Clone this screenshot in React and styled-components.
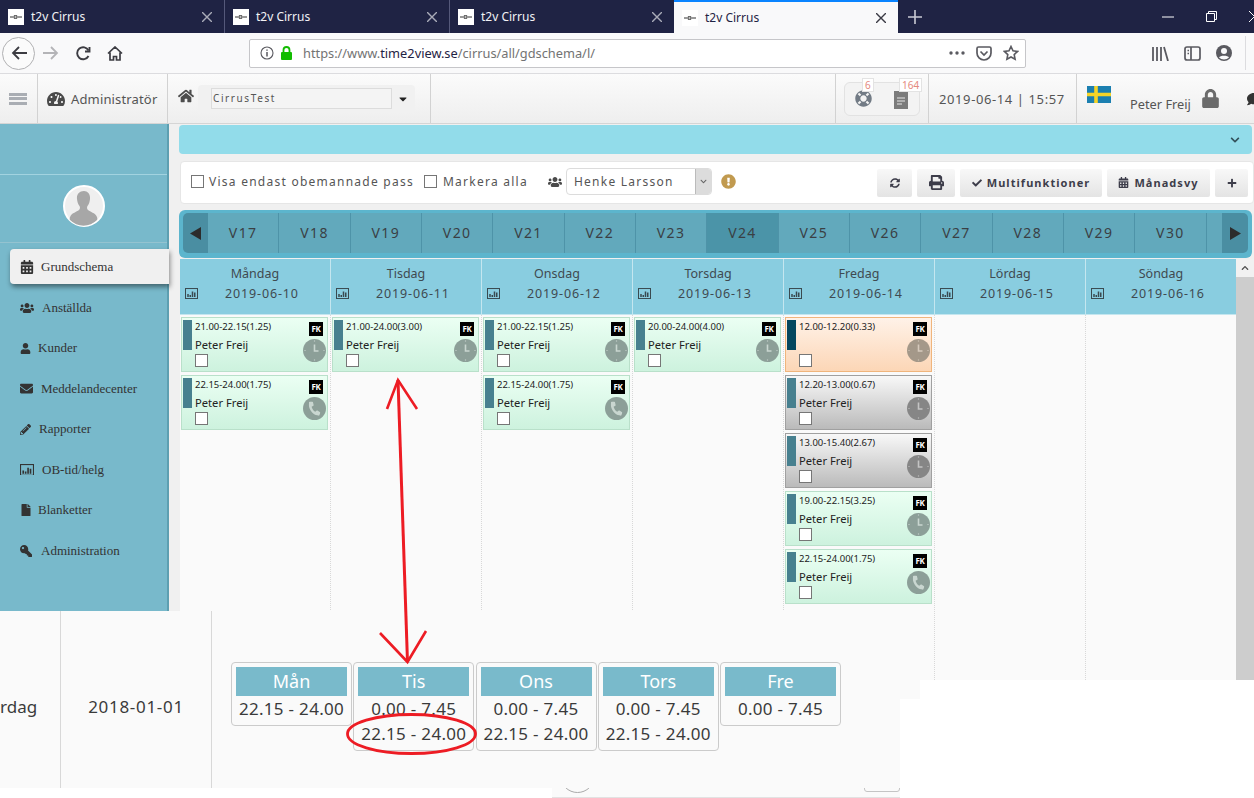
import styled, { createGlobalStyle } from "styled-components";
import {
  FaCalendarAlt, FaUsers, FaUser, FaEnvelope, FaPencilAlt, FaFile, FaKey, FaTachometerAlt,
  FaHome, FaLifeRing, FaLock, FaSyncAlt, FaPrint, FaCheck, FaPlus, FaExclamationCircle,
  FaComment, FaCaretDown, FaChevronDown, FaChevronUp, FaPhone,
} from "react-icons/fa";

const UI = `"Noto Sans", "Open Sans", sans-serif`;

const Global = createGlobalStyle`
  html, body { margin: 0; padding: 0; height: 798px; overflow: hidden; background: #fff; }
  body { font-family: ${UI}; color: #333; }
  * { box-sizing: border-box; }
`;

const Page = styled.div`
  position: relative;
  width: 1254px;
  height: 798px;
  overflow: hidden;
  display: flex;
  flex-direction: column;
`;

/* browser chrome */
const TabStrip = styled.div`
  height: 33px;
  background: #1f2344;
  display: flex;
  flex: none;
`;
const Tab = styled.div`
  width: ${(p) => (p.$active ? "224px" : "225px")};
  margin-left: ${(p) => (p.$active ? "-1px" : "0")};
  display: flex;
  align-items: center;
  padding: 0 12px 0 8px;
  font-size: 12px;
  color: ${(p) => (p.$active ? "#1f2344" : "#f2f2f5")};
  background: ${(p) => (p.$active ? "#f9f9fa" : "transparent")};
  border-top: ${(p) => (p.$active ? "2px solid #0a84ff" : "0")};
  border-right: ${(p) => (p.$active ? "0" : "1px solid #55597a")};
`;
const Favicon = styled.span`
  width: 16px;
  height: 16px;
  background: #fff;
  margin-right: 7px;
  display: flex;
  align-items: center;
  justify-content: center;
  flex: none;
`;
const TabTitle = styled.span`
  flex: 1;
`;
const WindowArea = styled.div`
  flex: 1;
  display: flex;
  align-items: center;
  color: #e6e6ea;
  padding-left: 9px;
`;
const WindowSpacer = styled.div`
  flex: 1;
`;
const WindowIcons = styled.div`
  display: flex;
  align-items: center;
  gap: 32px;
  margin-right: -6px;
`;

const Toolbar = styled.div`
  height: 41px;
  background: #f9f9fa;
  border-bottom: 1px solid #dcdcdf;
  display: flex;
  align-items: center;
  flex: none;
  padding-left: 2px;
`;
const BackCircle = styled.span`
  width: 33px;
  height: 33px;
  border: 1px solid #b1b1b3;
  border-radius: 50%;
  display: flex;
  align-items: center;
  justify-content: center;
  background: #fbfbfb;
`;
const NavIcon = styled.span`
  width: 32px;
  display: flex;
  justify-content: center;
`;
const UrlBox = styled.div`
  margin-left: 118px;
  width: 777px;
  height: 29px;
  background: #fff;
  border: 1px solid #c6c6c9;
  border-radius: 2px;
  display: flex;
  align-items: center;
  padding: 0 6px 0 10px;
  font-size: 12.8px;
  color: #737373;
`;
const UrlText = styled.span`
  flex: 1;
  margin-left: 10px;
  b { font-weight: 400; color: #1f2344; }
`;
const UrlActions = styled.div`
  display: flex;
  align-items: center;
  gap: 11px;
`;
const BrowserTools = styled.div`
  display: flex;
  align-items: center;
  gap: 15px;
  margin-left: 125px;
  height: 34px;
  padding-right: 13px;
  border-right: 1px solid #dcdcdf;
`;

/* app header */
const AppHeader = styled.header`
  height: 50px;
  flex: none;
  display: flex;
  overflow: hidden;
  background: linear-gradient(#fbfbfb, #eeeeee);
  border-bottom: 1px solid #d5d5d5;
`;
const HeadCell = styled.div`
  width: ${(p) => p.$w}px;
  flex: none;
  display: flex;
  align-items: center;
  border-right: ${(p) => (p.$plain ? "0" : "1px solid #d2d2d2")};
  padding-left: ${(p) => p.$pad || 0}px;
  font-size: 13px;
  color: #555;
`;
const Burger = styled.span`
  width: 18px;
  height: 12px;
  border-top: 3px solid #a9adb3;
  border-bottom: 3px solid #a9adb3;
  position: relative;
  &::after {
    content: "";
    position: absolute;
    left: 0;
    right: 0;
    top: 1.5px;
    height: 3px;
    background: #a9adb3;
  }
`;
const RoleLabel = styled.span`
  margin-left: 6px;
  letter-spacing: 0.15px;
`;
const TenantGroup = styled.div`
  width: 217px;
  height: 28px;
  margin-left: 4px;
  background: #f1f1f1;
  border-radius: 4px;
  display: flex;
  align-items: center;
  padding-left: 13px;
`;
const TenantInput = styled.div`
  width: 181px;
  height: 21px;
  border: 1px solid #dcdcdc;
  background: #f4f4f4;
  font-size: 10px;
  line-height: 18px;
  padding-left: 1px;
  letter-spacing: 1.6px;
  color: #555;
`;
const CaretWrap = styled.span`
  margin-left: 5px;
  display: flex;
  color: #222;
`;
const Spacer = styled.div`
  flex: 1;
  border-right: 1px solid #d2d2d2;
`;
const NotifyBox = styled.div`
  position: relative;
  width: 76px;
  height: 34px;
  margin-left: 8px;
  border: 1px solid #e2e2e2;
  border-radius: 6px;
  background: #f3f3f3;
  display: flex;
  align-items: center;
  color: #727b85;
`;
const NotifyIcon = styled.span`
  width: 37px;
  display: flex;
  justify-content: center;
`;
const Badge = styled.span`
  position: absolute;
  top: -5px;
  left: ${(p) => p.$left}px;
  height: 14px;
  padding: 0 2px;
  background: #fff;
  border: 1px solid #e3e3e3;
  color: #e58a80;
  font-size: 10px;
  line-height: 12px;
`;
const StampText = styled.span`
  letter-spacing: 0.6px;
`;
const UserName = styled.span`
  margin: 11px 10px 0 19px;
  font-size: 12.8px;
  white-space: nowrap;
`;
const LockIcon = styled.span`
  display: flex;
  flex: none;
  color: #6b6b6b;
`;

/* body */
const Body = styled.div`
  flex: 1;
  min-height: 0;
  display: flex;
  background: #f0f0f0;
`;
const Sidebar = styled.aside`
  width: 169px;
  flex: none;
  background: #78b9cb;
  border-right: 2px solid #5d9fb1;
`;
const SideTop = styled.div`
  height: 51px;
  border-bottom: 1px solid #a2d3e0;
`;
const AvatarArea = styled.div`
  height: 68px;
  border-bottom: 1px solid #94c3d0;
  display: flex;
  align-items: center;
  justify-content: center;
  padding-bottom: 5px;
`;
const Nav = styled.nav`
  padding: 6px 0 0 10px;
  display: flex;
  flex-direction: column;
  gap: 5.5px;
`;
const NavItem = styled.div`
  height: 35px;
  margin-right: -2px;
  padding: 1px 0 0 10px;
  display: flex;
  align-items: center;
  gap: ${(p) => p.$gap}px;
  font: 13px "Liberation Serif", serif;
  color: #333;
  border-radius: 4px 0 0 4px;
  background: ${(p) => (p.$active ? "#f0f0f0" : "transparent")};
  box-shadow: ${(p) => (p.$active ? "1px 3px 5px rgba(0,0,0,0.45)" : "none")};
  position: relative;
  svg { flex: none; }
`;

const Main = styled.main`
  flex: 1;
  min-width: 0;
  display: flex;
  flex-direction: column;
  padding: 1px 0 0 10px;
`;
const Banner = styled.div`
  height: 29px;
  margin-right: 2px;
  flex: none;
  background: #92dcea;
  border-radius: 4px;
  display: flex;
  align-items: center;
  justify-content: flex-end;
  padding: 0 12px 0 0;
  color: #33505a;
`;
const FilterBar = styled.div`
  height: 43px;
  flex: none;
  margin: 7px 0 6px 1px;
  background: #fff;
  border: 1px solid #e6e6e6;
  border-radius: 4px;
  display: flex;
  align-items: center;
  padding: 0 5px 2px 10px;
  font-size: 12px;
  letter-spacing: 1.25px;
  color: #555;
`;
const Check = styled.span`
  width: 13px;
  height: 13px;
  flex: none;
  background: #fff;
  border: 1px solid #767676;
  margin-right: ${(p) => p.$right || 0}px;
`;
const FilterLabel = styled.span`
  margin-right: 10px;
  white-space: nowrap;
`;
const PersonIcon = styled.span`
  margin: 0 4px 0 10px;
  display: flex;
  color: #4a4a4a;
`;
const PersonSelect = styled.div`
  width: 146px;
  height: 27px;
  border: 1px solid #dcdcdc;
  border-radius: 4px;
  display: flex;
  align-items: center;
  padding-left: 7px;
  overflow: hidden;
  letter-spacing: 1.25px;
`;
const SelectText = styled.span`
  flex: 1;
`;
const SelectArrow = styled.span`
  width: 16px;
  height: 100%;
  background: #dcdcdc;
  border-left: 1px solid #bbb;
  display: flex;
  align-items: center;
  justify-content: center;
  color: #666;
`;
const WarnIcon = styled.span`
  margin-left: 9px;
  display: flex;
  color: #c19a4f;
`;
const FilterButtons = styled.div`
  margin-left: auto;
  display: flex;
  gap: 5px;
  margin-top: 2px;
`;
const ToolButton = styled.button`
  width: ${(p) => p.$w}px;
  height: 28px;
  padding: 0;
  border: 0;
  border-radius: 2px;
  background: linear-gradient(#f8f8f8, #e4e4e4);
  display: flex;
  align-items: center;
  justify-content: center;
  gap: 5px;
  font: 700 11px ${UI};
  letter-spacing: 1.05px;
  color: #3d3d4a;
`;

const WeekBar = styled.div`
  height: 48px;
  flex: none;
  margin-right: 2px;
  background: #5cb5cd;
  border-radius: 6px;
  padding: 3px 4px 5px;
  display: flex;
`;
const WeekArrow = styled.div`
  width: ${(p) => p.$w}px;
  flex: none;
  background: #4a8ea2;
  border-radius: ${(p) => (p.$right ? "0 5px 5px 0" : "5px 0 0 5px")};
  display: flex;
  align-items: center;
  justify-content: center;
`;
const WeekTrack = styled.div`
  flex: 1;
  display: flex;
  overflow: hidden;
  background: #62a9bc;
`;
const WeekCell = styled.div`
  width: 71.33px;
  flex: none;
  display: flex;
  align-items: center;
  justify-content: center;
  padding-bottom: 2px;
  border-right: 1.5px solid #4e93a8;
  background: ${(p) => (p.$active ? "#4b94a8" : "transparent")};
  font-size: 14px;
  letter-spacing: 1.4px;
  color: #3a3f44;
`;

const ScheduleArea = styled.div`
  flex: 1;
  min-height: 0;
  display: flex;
  margin-top: 1px;
  margin-left: 1px;
`;
const DayGrid = styled.div`
  width: 1056px;
  flex: none;
  display: grid;
  grid-template-columns: repeat(7, 151px);
  background: #fafafa;
`;
const DayColumn = styled.div`
  border-right: 1px dotted #d8d8d8;
`;
const DayHead = styled.div`
  height: 56px;
  background: #89cde0;
  border-right: 1px solid #c4e6ef;
  border-bottom: 1px solid #c4e6ef;
  margin-right: -1px;
  padding-top: 6px;
  color: #3f4a50;
`;
const DayName = styled.div`
  font-size: 12.5px;
  line-height: 17px;
  text-align: center;
`;
const DayDate = styled.div`
  display: flex;
  align-items: center;
  padding: 0 4px 0 5px;
  margin-top: 3px;
  font-size: 12.5px;
  line-height: 17px;
  letter-spacing: 0.85px;
  span { flex: 1; text-align: center; }
`;
const CardList = styled.div`
  padding: 2px 2px 0 1px;
  display: flex;
  flex-direction: column;
  gap: 3px;
`;
const tones = {
  green: { border: "#b9e0ca", from: "#ebfff3", to: "#cdf2de", bar: "#47808f", icon: "#8c9f98", mark: "#c9d6d0" },
  orange: { border: "#f0b57c", from: "#fff2e8", to: "#fcd6b6", bar: "#04475f", icon: "#a49889", mark: "#d6cabd" },
  grey: { border: "#a0a0a0", from: "#f8f8f8", to: "#bababa", bar: "#47808f", icon: "#868686", mark: "#c4c4c4" },
};
const Card = styled.div`
  height: 55px;
  border: 1px solid ${(p) => tones[p.$tone].border};
  background: linear-gradient(${(p) => tones[p.$tone].from}, ${(p) => tones[p.$tone].to});
  padding: 2px 2px 2px 1px;
  display: flex;
`;
const CardBar = styled.div`
  width: 9px;
  height: 30px;
  flex: none;
  background: ${(p) => tones[p.$tone].bar};
`;
const CardBody = styled.div`
  flex: 1;
  padding-left: 3px;
  display: flex;
  flex-direction: column;
  color: #222;
`;
const CardTime = styled.div`
  font-size: 9.5px;
  line-height: 12px;
  margin-top: 1px;
`;
const CardName = styled.div`
  font-size: 11.2px;
  line-height: 14px;
  height: 14px;
  margin-top: 5px;
`;
const CardCheck = styled(Check)`
  margin-top: 2px;
`;
const CardSide = styled.div`
  width: 24px;
  flex: none;
  display: flex;
  flex-direction: column;
  align-items: center;
  gap: 3px;
  padding-top: 2px;
  margin-right: -1px;
`;
const FkMark = styled.span`
  width: 14px;
  height: 14px;
  margin-left: 4px;
  background: #000;
  color: #fff;
  font-size: 8px;
  font-weight: 700;
  line-height: 14px;
  letter-spacing: -0.4px;
  text-align: center;
`;
const StatusDisc = styled.span`
  width: 23px;
  height: 23px;
  border-radius: 50%;
  background: ${(p) => tones[p.$tone].icon};
  color: ${(p) => tones[p.$tone].mark};
  display: flex;
  align-items: center;
  justify-content: center;
`;
const ScrollTrack = styled.div`
  flex: 1;
  background: #f1f1f1;
  display: flex;
  flex-direction: column;
`;
const ScrollButton = styled.div`
  height: 18px;
  display: flex;
  align-items: center;
  justify-content: center;
  color: #505050;
`;
const ScrollThumb = styled.div`
  flex: 1;
  background: #cdcdcd;
`;

/* pasted second screenshot on top of the page */
const Pasted = styled.div`
  position: absolute;
  left: 0;
  top: 611px;
  width: 900px;
  height: 177px;
  background: #fafafa;
  display: flex;
  font-size: 17px;
  color: #3a3a3a;
`;
const PastedCell = styled.div`
  width: ${(p) => p.$w}px;
  flex: none;
  border-right: 1px solid #d8d8d8;
  display: flex;
  align-items: center;
  justify-content: ${(p) => (p.$left ? "flex-start" : "center")};
  padding-top: 13px;
  letter-spacing: ${(p) => (p.$left ? "0" : "0.7px")};
`;
const PastedDays = styled.div`
  display: flex;
  align-items: flex-start;
  gap: 1.25px;
  padding: 51px 0 0 19px;
`;
const WeekdayCard = styled.div`
  width: 121px;
  padding: 4px;
  background: #fafafa;
  border: 1px solid #cbcbcb;
  border-radius: 4px;
  text-align: center;
`;
const WeekdayHead = styled.div`
  height: 29px;
  background: #79bacb;
  color: #fff;
  font-size: 18px;
  line-height: 29px;
`;
const WeekdayLine = styled.div`
  height: 25px;
  font-size: 17px;
  line-height: 25px;
  letter-spacing: 0.3px;
  white-space: nowrap;
`;
const BottomStrip = styled.div`
  position: absolute;
  left: 552px;
  top: 788px;
  width: 348px;
  height: 10px;
  background: #fafafa;
  border-bottom: 1px solid #e2e2e2;
  overflow: hidden;
`;
const StripCircle = styled.span`
  position: absolute;
  left: 8px;
  top: -30px;
  width: 35px;
  height: 35px;
  border: 1px solid #aaa;
  border-radius: 50%;
`;
const StripBox = styled.span`
  position: absolute;
  right: 0;
  top: -10px;
  width: 36px;
  height: 14px;
  border: 1px solid #c4c4c4;
  border-radius: 3px;
`;
const WhitePatch = styled.div`
  position: absolute;
  left: ${(p) => p.$left}px;
  top: ${(p) => p.$top}px;
  right: 0;
  bottom: 0;
  background: #fff;
`;
const Annotation = styled.svg`
  position: absolute;
  left: 0;
  top: 0;
  pointer-events: none;
`;

const BarsIcon = ({ size = 13, color = "#3a4a50" }) => (
  <svg width={size} height={size * 0.85} viewBox="0 0 26 22" fill="none">
    <rect x="1" y="1" width="24" height="20" stroke={color} strokeWidth="2" />
    <path d="M6 12v6M10.5 14v4M15 7v11M19.5 9v9" stroke={color} strokeWidth="3" />
  </svg>
);

const ClockGlyph = () => (
  <svg width="23" height="23" viewBox="0 0 23 23" fill="none" stroke="currentColor" strokeWidth="1.6">
    <path d="M11.5 5.5v6.5h4" />
    <path d="M11.5 1.5v1M11.5 20.5v1M1.5 11.5h1M20.5 11.5h1" strokeWidth="1.2" />
  </svg>
);

const Triangle = ({ dir }) => (
  <svg width="11" height="13" viewBox="0 0 11 13" fill="#2c2c2c">
    <path d={dir === "left" ? "M0 6.5L11 0v13z" : "M11 6.5L0 0v13z"} />
  </svg>
);

const weeks = ["V17", "V18", "V19", "V20", "V21", "V22", "V23", "V24", "V25", "V26", "V27", "V28", "V29", "V30", ""];

const days = [
  {
    name: "Måndag", date: "2019-06-10",
    cards: [
      { time: "21.00-22.15(1.25)", tone: "green", who: "Peter Freij" },
      { time: "22.15-24.00(1.75)", tone: "green", who: "Peter Freij", phone: true },
    ],
  },
  {
    name: "Tisdag", date: "2019-06-11",
    cards: [{ time: "21.00-24.00(3.00)", tone: "green", who: "Peter Freij" }],
  },
  {
    name: "Onsdag", date: "2019-06-12",
    cards: [
      { time: "21.00-22.15(1.25)", tone: "green", who: "Peter Freij" },
      { time: "22.15-24.00(1.75)", tone: "green", who: "Peter Freij", phone: true },
    ],
  },
  {
    name: "Torsdag", date: "2019-06-13",
    cards: [{ time: "20.00-24.00(4.00)", tone: "green", who: "Peter Freij" }],
  },
  {
    name: "Fredag", date: "2019-06-14",
    cards: [
      { time: "12.00-12.20(0.33)", tone: "orange", who: "" },
      { time: "12.20-13.00(0.67)", tone: "grey", who: "Peter Freij" },
      { time: "13.00-15.40(2.67)", tone: "grey", who: "Peter Freij" },
      { time: "19.00-22.15(3.25)", tone: "green", who: "Peter Freij" },
      { time: "22.15-24.00(1.75)", tone: "green", who: "Peter Freij", phone: true },
    ],
  },
  { name: "Lördag", date: "2019-06-15", cards: [] },
  { name: "Söndag", date: "2019-06-16", cards: [] },
];

const navItems = [
  { label: "Grundschema", icon: <FaCalendarAlt size={14} />, gap: 7, active: true },
  { label: "Anställda", icon: <FaUsers size={14} />, gap: 8 },
  { label: "Kunder", icon: <FaUser size={11} />, gap: 7 },
  { label: "Meddelandecenter", icon: <FaEnvelope size={13} />, gap: 8 },
  { label: "Rapporter", icon: <FaPencilAlt size={11} />, gap: 8 },
  { label: "OB-tid/helg", icon: <BarsIcon size={14} color="#333" />, gap: 8 },
  { label: "Blanketter", icon: <FaFile size={12} />, gap: 6 },
  { label: "Administration", icon: <FaKey size={12} style={{ transform: "scaleX(-1)" }} />, gap: 9 },
];

const weekdayCards = [
  { head: "Mån", lines: ["22.15 - 24.00"] },
  { head: "Tis", lines: ["0.00 - 7.45", "22.15 - 24.00"] },
  { head: "Ons", lines: ["0.00 - 7.45", "22.15 - 24.00"] },
  { head: "Tors", lines: ["0.00 - 7.45", "22.15 - 24.00"] },
  { head: "Fre", lines: ["0.00 - 7.45"] },
];

const BrowserTab = ({ active }) => (
  <Tab $active={active}>
    <Favicon>
      <svg width="12" height="4" viewBox="0 0 12 4" fill="none" stroke="#333" strokeWidth="1">
        <path d="M0 2h3M4 .8h3v2.4H4zM8 2h4" />
      </svg>
    </Favicon>
    <TabTitle>t2v Cirrus</TabTitle>
    <svg width="10" height="10" viewBox="0 0 10 10" stroke={active ? "#3a3a44" : "#a9abb8"} strokeWidth="1.4">
      <path d="M0 0l10 10M10 0L0 10" />
    </svg>
  </Tab>
);

const ShiftCard = ({ card }) => (
  <Card $tone={card.tone}>
    <CardBar $tone={card.tone} />
    <CardBody>
      <CardTime>{card.time}</CardTime>
      <CardName>{card.who}</CardName>
      <CardCheck />
    </CardBody>
    <CardSide>
      <FkMark>FK</FkMark>
      <StatusDisc $tone={card.tone}>
        {card.phone ? <FaPhone size={13} style={{ transform: "rotate(100deg)" }} /> : <ClockGlyph />}
      </StatusDisc>
    </CardSide>
  </Card>
);

const App = () => {
  return (
    <Page>
      <Global />
      <TabStrip>
        <BrowserTab />
        <BrowserTab />
        <BrowserTab />
        <BrowserTab active />
        <WindowArea>
          <svg width="16" height="16" viewBox="0 0 16 16" stroke="#c9cad4" strokeWidth="1.6">
            <path d="M8 1v14M1 8h14" />
          </svg>
          <WindowSpacer />
          <WindowIcons>
            <svg width="12" height="2" viewBox="0 0 12 2" stroke="#fff"><path d="M0 1h12" /></svg>
            <svg width="11" height="11" viewBox="0 0 11 11" fill="none" stroke="#fff">
              <path d="M.5 2.5h8v8h-8zM2.5 2.5v-2h8v8h-2" />
            </svg>
            <svg width="11" height="11" viewBox="0 0 11 11" stroke="#fff"><path d="M0 0l11 11M11 0L0 11" /></svg>
          </WindowIcons>
        </WindowArea>
      </TabStrip>

      <Toolbar>
        <BackCircle>
          <svg width="16" height="14" viewBox="0 0 16 14" fill="none" stroke="#3c3c42" strokeWidth="1.8">
            <path d="M16 7H2M8 1L2 7l6 6" />
          </svg>
        </BackCircle>
        <NavIcon>
          <svg width="16" height="14" viewBox="0 0 16 14" fill="none" stroke="#b4b4b7" strokeWidth="1.8">
            <path d="M0 7h14M8 1l6 6-6 6" />
          </svg>
        </NavIcon>
        <NavIcon>
          <svg width="15" height="15" viewBox="0 0 15 15" fill="none" stroke="#3c3c42" strokeWidth="1.9">
            <path d="M12.5 10a6 6 0 1 1 0-5.5" />
            <path d="M13.5 1v4.5H9" />
          </svg>
        </NavIcon>
        <NavIcon>
          <svg width="16" height="15" viewBox="0 0 16 15" fill="none" stroke="#3c3c42" strokeWidth="1.7">
            <path d="M1 7.5L8 1l7 6.5M3 6.5V14h3.5v-3.5h3V14H13V6.5" />
          </svg>
        </NavIcon>
        <UrlBox>
          <svg width="14" height="14" viewBox="0 0 14 14" fill="none" stroke="#5a5a60" strokeWidth="1.1">
            <circle cx="7" cy="7" r="6" />
            <path d="M7 6v4.5M7 3.5v1.2" strokeWidth="1.5" />
          </svg>
          <svg width="13" height="14" viewBox="0 0 13 14" style={{ marginLeft: 6 }}>
            <path d="M3.5 6V4a3 3 0 0 1 6 0v2" fill="none" stroke="#12bc00" strokeWidth="1.8" />
            <rect x="1" y="6" width="11" height="8" rx="1" fill="#12bc00" />
          </svg>
          <UrlText>https://www.<b>time2view.se</b>/cirrus/all/gdschema/l/</UrlText>
          <UrlActions>
            <svg width="16" height="4" viewBox="0 0 16 4" fill="#5a5a60">
              <circle cx="2" cy="2" r="1.7" />
              <circle cx="8" cy="2" r="1.7" />
              <circle cx="14" cy="2" r="1.7" />
            </svg>
            <svg width="16" height="15" viewBox="0 0 16 15" fill="none" stroke="#5a5a60" strokeWidth="1.7">
              <path d="M1 2.5C1 1.5 1.6 1 2.5 1h11c.9 0 1.5.5 1.5 1.5V7a7 7 0 0 1-14 0z" />
              <path d="M4.5 5.5L8 9l3.5-3.5" />
            </svg>
            <svg width="16" height="16" viewBox="0 0 16 16" fill="none" stroke="#5a5a60" strokeWidth="1.6">
              <path d="M8 1.5l2 4.3 4.6.6-3.4 3.2.9 4.7L8 12l-4.100 2.300.9-4.700L1.400 6.400 6 5.800z" />
            </svg>
          </UrlActions>
        </UrlBox>
        <BrowserTools>
          <svg width="18" height="15" viewBox="0 0 18 15" fill="none" stroke="#5a5a60" strokeWidth="1.8">
            <path d="M2 1v14M6 1v14M10 1v14M13 1l4 14" />
          </svg>
          <svg width="17" height="15" viewBox="0 0 17 15" fill="none" stroke="#5a5a60" strokeWidth="1.7">
            <rect x="1" y="1" width="15" height="13" rx="2" />
            <path d="M7 1v13M3.5 4.5H5M3.5 7.5H5" />
          </svg>
          <svg width="16" height="16" viewBox="0 0 16 16">
            <circle cx="8" cy="8" r="8" fill="#5a5a60" />
            <circle cx="8" cy="6" r="3" fill="#f9f9fa" />
            <path d="M3 12.5c1-2.5 9-2.5 10 0a7 7 0 0 1-10 0z" fill="#f9f9fa" />
          </svg>
        </BrowserTools>
      </Toolbar>

      <AppHeader>
        <HeadCell $w={38} $pad={9}><Burger /></HeadCell>
        <HeadCell $w={130} $pad={9}>
          <FaTachometerAlt size={18} color="#4a4a4a" />
          <RoleLabel>Administratör</RoleLabel>
        </HeadCell>
        <HeadCell $w={263} $pad={10}>
          <FaHome size={16} color="#4d4d4d" style={{ marginTop: -5 }} />
          <TenantGroup>
            <TenantInput>CirrusTest</TenantInput>
            <CaretWrap><FaCaretDown size={12} /></CaretWrap>
          </TenantGroup>
        </HeadCell>
        <Spacer />
        <HeadCell $w={93}>
          <NotifyBox>
            <NotifyIcon><FaLifeRing size={17} /></NotifyIcon>
            <NotifyIcon>
              <svg width="14" height="20" viewBox="0 0 14 20">
                <rect y="2" width="14" height="18" fill="#7b7b7b" />
                <path d="M3 9h8M3 12h8M3 15h5" stroke="#e8e8e8" strokeWidth="1.2" />
              </svg>
            </NotifyIcon>
            <Badge $left={17}>6</Badge>
            <Badge $left={54}>164</Badge>
          </NotifyBox>
        </HeadCell>
        <HeadCell $w={148} $pad={10}>
          <StampText>2019-06-14 | 15:57</StampText>
        </HeadCell>
        <HeadCell $w={177} $pad={10} $plain>
          <svg width="24" height="17" viewBox="0 0 24 17" style={{ marginTop: -9, flex: "none" }}>
            <rect width="24" height="17" fill="#1b7fb0" />
            <path d="M0 8.5h24M9 0v17" stroke="#f5d327" strokeWidth="3.6" />
          </svg>
          <UserName>Peter Freij</UserName>
          <LockIcon><FaLock size={19} /></LockIcon>
          <FaComment size={14} color="#333" style={{ marginLeft: 27, flex: "none" }} />
        </HeadCell>
      </AppHeader>

      <Body>
        <Sidebar>
          <SideTop />
          <AvatarArea>
            <svg width="42" height="42" viewBox="0 0 42 42">
              <circle cx="21" cy="21" r="20" fill="#efefef" stroke="#fff" strokeWidth="2" />
              <path
                d="M21 6c-5 0-7.5 3.5-7 8 .2 2.5 1 5 2.500 7 .7 1 .7 3-.5 4-2.500 2-7 3-8.500 6-1 2-1 3-.5 4a19 19 0 0 0 27 0c.5-1 .5-2-.5-4-1.500-3-6-4-8.500-6-1.200-1-1.200-3-.5-4 1.500-2 2.300-4.500 2.500-7 .5-4.500-2-8-6-8z"
                fill="#a7a7a7"
              />
            </svg>
          </AvatarArea>
          <Nav>
            {navItems.map((item) => (
              <NavItem key={item.label} $active={item.active} $gap={item.gap}>
                {item.icon}
                {item.label}
              </NavItem>
            ))}
          </Nav>
        </Sidebar>

        <Main>
          <Banner><FaChevronDown size={10} /></Banner>
          <FilterBar>
            <Check $right={5} />
            <FilterLabel>Visa endast obemannade pass</FilterLabel>
            <Check $right={6} />
            <FilterLabel>Markera alla</FilterLabel>
            <PersonIcon><FaUsers size={14} /></PersonIcon>
            <PersonSelect>
              <SelectText>Henke Larsson</SelectText>
              <SelectArrow><FaChevronDown size={7} /></SelectArrow>
            </PersonSelect>
            <WarnIcon><FaExclamationCircle size={15} /></WarnIcon>
            <FilterButtons>
              <ToolButton $w={35}><FaSyncAlt size={10} /></ToolButton>
              <ToolButton $w={38}><FaPrint size={15} /></ToolButton>
              <ToolButton $w={142}><FaCheck size={10} />Multifunktioner</ToolButton>
              <ToolButton $w={103}><FaCalendarAlt size={11} />Månadsvy</ToolButton>
              <ToolButton $w={33}><FaPlus size={10} /></ToolButton>
            </FilterButtons>
          </FilterBar>
          <WeekBar>
            <WeekArrow $w={25}><Triangle dir="left" /></WeekArrow>
            <WeekTrack>
              {weeks.map((w, i) => (
                <WeekCell key={i} $active={w === "V24"}>{w}</WeekCell>
              ))}
            </WeekTrack>
            <WeekArrow $w={26} $right><Triangle dir="right" /></WeekArrow>
          </WeekBar>
          <ScheduleArea>
            <DayGrid>
              {days.map((day) => (
                <DayColumn key={day.name}>
                  <DayHead>
                    <DayName>{day.name}</DayName>
                    <DayDate><BarsIcon /><span>{day.date}</span></DayDate>
                  </DayHead>
                  <CardList>
                    {day.cards.map((card) => <ShiftCard key={card.time} card={card} />)}
                  </CardList>
                </DayColumn>
              ))}
            </DayGrid>
            <ScrollTrack>
              <ScrollButton><FaChevronUp size={8} /></ScrollButton>
              <ScrollThumb />
            </ScrollTrack>
          </ScheduleArea>
        </Main>
      </Body>

      <WhitePatch $left={0} $top={788} />
      <Pasted>
        <PastedCell $w={61} $left>rdag</PastedCell>
        <PastedCell $w={151}>2018-01-01</PastedCell>
        <PastedDays>
          {weekdayCards.map((c) => (
            <WeekdayCard key={c.head}>
              <WeekdayHead>{c.head}</WeekdayHead>
              {c.lines.map((l) => <WeekdayLine key={l}>{l}</WeekdayLine>)}
            </WeekdayCard>
          ))}
        </PastedDays>
      </Pasted>
      <BottomStrip><StripCircle /><StripBox /></BottomStrip>
      <WhitePatch $left={900} $top={699} />
      <WhitePatch $left={920} $top={680} />

      <Annotation width="1254" height="798" viewBox="0 0 1254 798" fill="none" stroke="#ed1c24" strokeWidth="2.6">
        <path d="M398 380L407.5 662" strokeWidth="3" />
        <path d="M387 409L398 380L417 409" />
        <path d="M380 633L407.5 662L426 631" />
        <ellipse cx="411.5" cy="734" rx="64" ry="19.5" strokeWidth="2.8" />
      </Annotation>
    </Page>
  );
};

export default App;
